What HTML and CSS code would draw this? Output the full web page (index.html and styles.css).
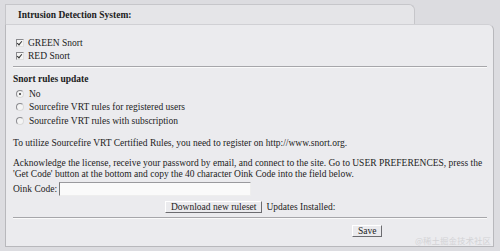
FILE: index.html
```html
<!DOCTYPE html>
<html lang="en">
<head>
  <meta charset="UTF-8">
  <title>Intrusion Detection System</title>
  <link rel="stylesheet" href="styles.css">
</head>
<body>

<div class="page">
  <div class="tab">Intrusion Detection System:</div>
  <div class="panel">
    <div class="checks">
      <div class="row"><span class="check"></span>GREEN Snort</div>
      <div class="row"><span class="check"></span>RED Snort</div>
    </div>
    <div class="rule"></div>

    <div class="title">Snort rules update</div>
    <div class="radios">
      <div class="row"><span class="radio on"></span>No</div>
      <div class="row"><span class="radio"></span>Sourcefire VRT rules for registered users</div>
      <div class="row"><span class="radio"></span>Sourcefire VRT rules with subscription</div>
    </div>

    <p class="text first">To utilize Sourcefire VRT Certified Rules, you need to register on http://www.snort.org.</p>
    <p class="text">Acknowledge the license, receive your password by email, and connect to the site. Go to USER PREFERENCES, press the 'Get Code' button at the bottom and copy the 40 character Oink Code into the field below.</p>

    <div class="oink">Oink Code: <span class="field"></span></div>
    <div class="download">
      <span class="button">Download new ruleset</span>
      <span>Updates Installed:</span>
    </div>
    <div class="rule"></div>

    <div class="save-row"><span class="button">Save</span></div>
    <div class="watermark">@稀土掘金技术社区</div>
  </div>
</div>

</body>
</html>
```

FILE: styles.css
```css
body {
  margin: 0;
  background-color: #dcdce0;
  font-family: 'Liberation Serif', 'Noto Sans CJK SC', serif;
  font-size: 9.5px;
  color: #1c1c1c;
}

.page {
  padding: 4px 6px 4px 5px;
}

.tab {
  width: 396px;
  height: 20px;
  line-height: 21px;
  padding-left: 12px;
  background-color: #e5e5e8;
  border: 1px solid #c6c6ca;
  border-bottom: none;
  border-radius: 0 6px 0 0;
  font-weight: bold;
  margin-bottom: -1px;
}

.panel {
  position: relative;
  height: 221px;
  padding: 0 6px 0 7px;
  background-color: #ebebee;
  border: 1px solid #b8b8bc;
  border-top-color: #d0d0d4;
  border-radius: 0 6px 0 0;
}

.checks {
  padding: 11px 0 4px 3px;
}

.row {
  display: flex;
  align-items: center;
  height: 13px;
}

.check {
  width: 6px;
  height: 6px;
  margin-right: 4px;
  border: 1px solid #8a8a8e;
  border-right-color: #e0e0e0;
  border-bottom-color: #e0e0e0;
  background: #f4f4f4;
  position: relative;
}

.check::after {
  content: "";
  position: absolute;
  left: 1px;
  top: 0;
  width: 2px;
  height: 4px;
  border: solid #333;
  border-width: 0 1px 1px 0;
  transform: rotate(40deg);
}

.rule {
  border-top: 1px solid #a6a6aa;
  border-bottom: 1px solid #fafafa;
}

.title {
  font-weight: bold;
  margin-top: 5px;
  height: 13px;
  line-height: 13px;
}

.radios {
  padding-left: 3px;
  margin-top: 1px;
}

.radios .row {
  height: 13.5px;
}

.radio {
  width: 6px;
  height: 6px;
  margin-right: 5px;
  border-radius: 50%;
  border: 1px solid #dadada;
  border-top-color: #8c8c90;
  border-left-color: #8c8c90;
  background: #f4f4f4;
  position: relative;
}

.radio.on::after {
  content: "";
  position: absolute;
  left: 2px;
  top: 2px;
  width: 2px;
  height: 2px;
  border-radius: 50%;
  background: #333;
}

.text {
  margin: 9px 0 0;
  line-height: 11px;
}

.text.first {
  margin-top: 10px;
}

.oink {
  display: flex;
  align-items: center;
  margin-top: 2px;
  height: 15px;
}

.field {
  width: 190px;
  height: 12px;
  margin-left: 2px;
  background: #fafafa;
  border: 1px solid #eee;
  border-left-color: #777;
  border-top-color: #9a9a9e;
}

.download {
  display: flex;
  align-items: center;
  gap: 4px;
  margin: 3px 0 3px 152px;
  height: 14px;
}

.button {
  display: inline-block;
  padding: 0 5px;
  height: 10px;
  line-height: 10px;
  background: #ebebee;
  border: 1px solid #fff;
  border-right-color: #6c6c70;
  border-bottom-color: #6c6c70;
}

.save-row {
  padding: 6px 0 0 339px;
}

.watermark {
  position: absolute;
  right: 2px;
  bottom: 0;
  font-family: 'Noto Sans CJK SC', sans-serif;
  font-size: 8.5px;
  color: #d3d3d6;
}
```
